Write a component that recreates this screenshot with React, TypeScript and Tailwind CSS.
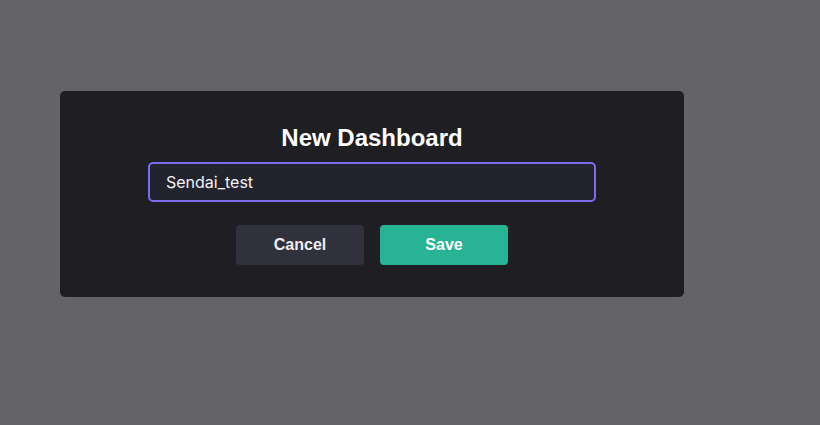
import React, { useState } from 'react';

const App = () => {
  const [name, setName] = useState('Sendai_test');

  return (
    <div className="w-[820px] h-[425px] bg-[#636368] pt-[91px] pl-[60px] overflow-hidden">
      <div className="w-[624px] h-[206px] bg-[#1e1e23] rounded-[5px] flex flex-col items-center pt-[31px]">
        <h2 className="text-[24px] leading-[32px] font-bold text-white font-['Liberation_Sans',Arial,sans-serif]">
          New Dashboard
        </h2>
        <input
          value={name}
          onChange={(e) => setName(e.target.value)}
          className="mt-[8px] w-[448px] h-[40px] px-[16px] bg-[#23232d] border-2 border-[#7b6cf0] rounded-[5px] text-[16px] text-[#f2f2f5] outline-none font-['Inter',sans-serif]"
        />
        <div className="mt-[23px] flex gap-[16px]">
          <button className="w-[128px] h-[40px] rounded-[4px] bg-[#31313d] text-[#ececf0] text-[16px] font-bold font-['Liberation_Sans',Arial,sans-serif]">
            Cancel
          </button>
          <button className="w-[128px] h-[40px] rounded-[4px] bg-[#28b494] text-white text-[16px] font-bold font-['Liberation_Sans',Arial,sans-serif]">
            Save
          </button>
        </div>
      </div>
    </div>
  );
};

export default App;
